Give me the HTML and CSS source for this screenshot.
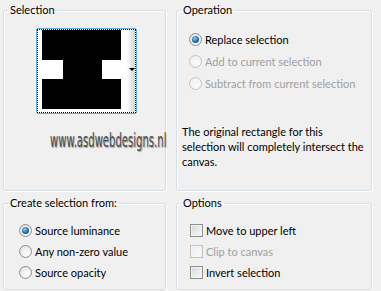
FILE: index.html
```html
<!DOCTYPE html>
<html lang="en">

<head>
  <meta charset="UTF-8">
  <title>Selection</title>
  <link rel="stylesheet" href="styles.css">
</head>

<body>
  <div class="dialog">
    <!-- 選取預覽 -->
    <fieldset class="group">
      <legend>Selection</legend>
      <div class="inner sel">
        <div class="preview">
          <div class="focus">
            <div class="swatch">
              <svg width="79" height="79" viewBox="0 0 79 79">
                <rect width="79" height="79" fill="#000" />
                <rect x="0" y="30" width="21" height="19" fill="#fff" />
                <rect x="60" y="30" width="19" height="19" fill="#fff" />
              </svg>
            </div>
            <div class="drop"><span class="arrow"></span></div>
          </div>
        </div>
        <div class="mark"><span>www.asdwebdesigns.nl</span></div>
      </div>
    </fieldset>

    <!-- 運算方式 -->
    <fieldset class="group">
      <legend>Operation</legend>
      <div class="inner op">
        <label class="opt"><span class="radio on"></span>Replace selection</label>
        <label class="opt off"><span class="radio"></span>Add to current selection</label>
        <label class="opt off"><span class="radio"></span>Subtract from current selection</label>
        <p class="note">The original rectangle for this<br>selection will completely intersect the<br>canvas.</p>
      </div>
    </fieldset>

    <fieldset class="group">
      <legend>Create selection from:</legend>
      <div class="inner from">
        <label class="opt row"><span class="radio on"></span>Source luminance</label>
        <label class="opt row"><span class="radio"></span>Any non-zero value</label>
        <label class="opt row"><span class="radio"></span>Source opacity</label>
      </div>
    </fieldset>

    <fieldset class="group">
      <legend>Options</legend>
      <div class="inner options">
        <label class="opt row"><span class="check"></span>Move to upper left</label>
        <label class="opt row off"><span class="check"></span>Clip to canvas</label>
        <label class="opt row"><span class="check"></span>Invert selection</label>
      </div>
    </fieldset>
  </div>
</body>

</html>
```

FILE: styles.css
```css
* {
  margin: 0;
  padding: 0;
  box-sizing: border-box;
}

body {
  background: #f0f0f0;
  color: #000;
  font: 11px/15px Lato, "Noto Sans", sans-serif;
}

.dialog {
  display: grid;
  grid-template-columns: 163px 196px;
  grid-template-rows: 189px 95px;
  column-gap: 10px;
  row-gap: 4px;
  padding: 2px 0 0 3px;
}

/* 群組框 */
.group {
  border: 1px solid #d5dfe5;
  border-radius: 3px;
  box-shadow: inset 1px 1px #fff, 1px 1px #fff;
  min-width: 0;
}

.group legend {
  margin-left: 4px;
  padding: 0 2px;
  line-height: 16px;
}

.sel {
  padding: 10px 0 0 32px;
}

.preview {
  width: 101px;
  height: 86px;
  border: 1px solid #5aaee0;
  border-radius: 2px;
  background: #fff;
}

.focus {
  display: flex;
  height: 100%;
  border: 1px dotted #000;
}

.swatch {
  padding: 0 0 0 4px;
}

.swatch svg {
  display: block;
}

.drop {
  flex: 1;
  position: relative;
  background: linear-gradient(90deg, #fff 40%, #d4d4d4);
}

.arrow {
  position: absolute;
  left: 8px;
  top: 38px;
  border-left: 3px solid transparent;
  border-right: 3px solid transparent;
  border-top: 3px solid #000;
}

/* 浮水印 */
.mark {
  margin: 19px 0 0 14px;
  white-space: nowrap;
}

.mark span {
  display: inline-block;
  font: 13px/14px "Liberation Sans Narrow", "DejaVu Sans Condensed", sans-serif;
  font-stretch: condensed;
  color: #4c4c4c;
  text-shadow: 1px 1px 1px #9a9a9a;
  transform: scale(0.86, 1.45);
  transform-origin: left center;
}

.op {
  padding: 10px 0 0 12px;
}

.opt {
  display: flex;
  align-items: center;
  gap: 3px;
  height: 22px;
}

.opt.row {
  height: 21px;
}

.off {
  color: #a0a0a0;
}

.note {
  margin: 30px 0 0 -7px;
}

.from {
  padding: 9px 0 0 15px;
}

.options {
  padding: 9px 0 0 13px;
}

/* 單選鈕 */
.radio {
  width: 13px;
  height: 13px;
  border-radius: 50%;
  border: 1px solid #8e8f8f;
  background: radial-gradient(circle at 65% 65%, #fff, #dcdcdc);
  position: relative;
}

.radio.on::after {
  content: "";
  position: absolute;
  left: 2px;
  top: 2px;
  width: 7px;
  height: 7px;
  border-radius: 50%;
  background: radial-gradient(circle at 40% 35%, #8fd0f5, #1a6ea8 55%, #0b4470);
}

.off .radio {
  border-color: #c4c4c4;
  background: radial-gradient(circle at 65% 65%, #fbfbfb, #ececec);
}

/* 核取方塊 */
.check {
  width: 13px;
  height: 13px;
  border: 1px solid #8e8f8f;
  background: linear-gradient(135deg, #d6d6d6, #fbfbfb);
  box-shadow: inset 0 0 0 1px #f2f2f2;
}

.off .check {
  border-color: #c4c4c4;
  background: linear-gradient(135deg, #ececec, #fbfbfb);
}
```
